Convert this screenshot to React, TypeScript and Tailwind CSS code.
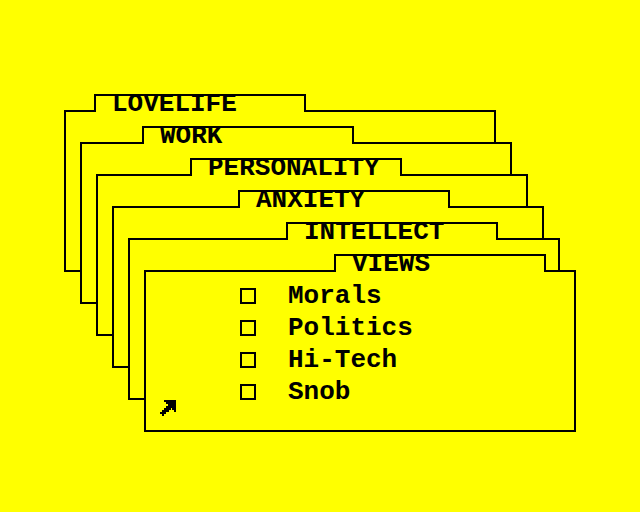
const folders = [
  { name: "LOVELIFE", body: "ml-0", tab: "ml-[30px]" },
  { name: "WORK", body: "ml-4 -mt-[146px]", tab: "ml-[62px]" },
  { name: "PERSONALITY", body: "ml-8 -mt-[146px]", tab: "ml-[94px]" },
  { name: "ANXIETY", body: "ml-12 -mt-[146px]", tab: "ml-[126px]" },
  { name: "INTELLECT", body: "ml-16 -mt-[146px]", tab: "ml-[158px]" },
  { name: "VIEWS", body: "ml-20 -mt-[146px]", tab: "ml-[190px]" },
];

const options = ["Morals", "Politics", "Hi-Tech", "Snob"];

function Arrow() {
  return (
    <svg viewBox="0 0 16 16" className="size-4" shapeRendering="crispEdges" aria-hidden="true">
      <path d="M4 0H16V12H14V10H12V8H10V10H8V12H6V14H4V16H2V14H0V12H2V10H4V8H6V6H8V4H6V2H4Z" />
      <path d="M8 8H11V10H9V12H7V10H8Z" />
    </svg>
  );
}

function Options() {
  return (
    <div className="flex h-full">
      <div className="flex w-[94px] items-end pb-[14px] pl-[14px]">
        <Arrow />
      </div>
      <div className="pt-2">
        {options.map((option) => (
          <label key={option} className="flex h-8 items-center gap-8">
            <input
              type="checkbox"
              className="size-4 appearance-none border-2 border-black checked:bg-black"
            />
            <span className="leading-8">{option}</span>
          </label>
        ))}
      </div>
    </div>
  );
}

export default function App() {
  return (
    <main className="min-h-screen bg-[#ffff00] px-16 pt-[94px] pb-20 font-['Liberation_Mono',monospace] text-[26px] font-bold text-black">
      <div className="mx-auto max-w-lg">
        {folders.map((folder, i) => (
          <section key={folder.name} className={`w-[calc(100%-80px)] ${folder.body}`}>
            <h2
              className={`relative -mb-0.5 h-[18px] w-[212px] border-2 border-b-0 border-black bg-[#ffff00] pl-4 leading-4 ${folder.tab}`}
            >
              {folder.name}
            </h2>
            <div className="h-[162px] border-2 border-black bg-[#ffff00]">
              {i === folders.length - 1 && <Options />}
            </div>
          </section>
        ))}
      </div>
    </main>
  );
}
